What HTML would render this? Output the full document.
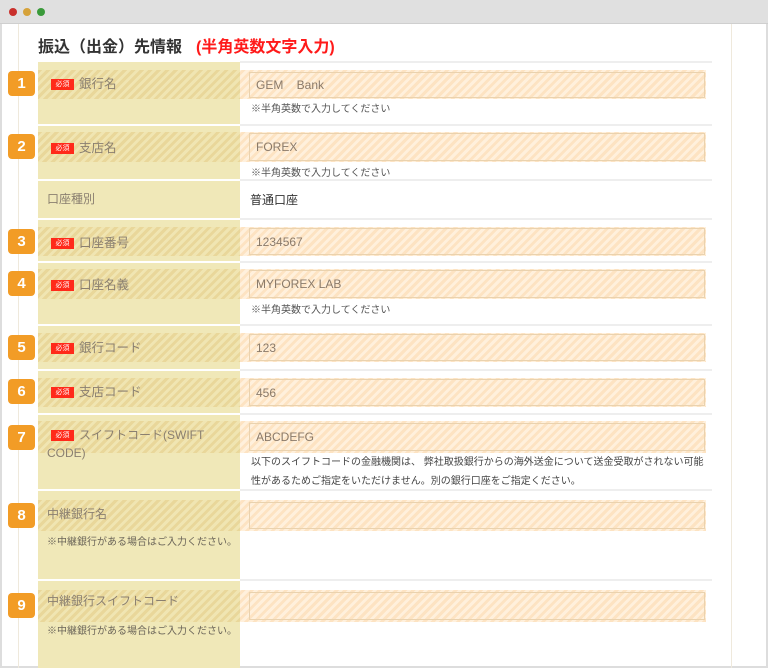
<!DOCTYPE html>
<html><head><meta charset="utf-8">
<style>
*{margin:0;padding:0;box-sizing:border-box}
body{width:768px;height:668px;overflow:hidden;background:#fff;font-family:"Liberation Sans","Noto Sans CJK JP",sans-serif;position:relative}
.tb{position:absolute;left:0;top:0;width:768px;height:24px;background:#e0e0e0;border-bottom:1px solid #cfcfcf}
.dot{position:absolute;top:8px;width:8px;height:8px;border-radius:50%}
.frame{position:absolute;left:0;top:24px;width:768px;height:644px;border-left:2px solid #ddd;border-right:2px solid #ddd;border-bottom:2px solid #ddd}
.vl{position:absolute;top:24px;height:644px;width:1px;background:#efe9dc}
h1{position:absolute;left:38px;top:33px;font-size:16px;font-weight:bold;color:#333;white-space:nowrap}
h1 span{color:#ff1a1a;margin-left:14px}
.lab{position:absolute;left:38px;width:202px;background:#f0e8b8}
.sepr{position:absolute;left:240px;width:472px;height:2px;background:#eeeeee}
.hat{position:absolute;left:38px;width:668px;background:repeating-linear-gradient(135deg,#fde3c2 0 3px,#fff0dc 3px 6px)}
.hatl{position:absolute;left:38px;width:202px;background:repeating-linear-gradient(135deg,#e9d79a 0 3px,#f0e5b2 3px 6px)}
.inp{position:absolute;left:249px;width:456px;border:1px solid #ead2ae;font-size:12px;color:#8a7a6a;padding-left:6px;display:flex;align-items:center}
.badge{position:absolute;left:8px;width:27px;height:25px;background:#f29c26;border-radius:4px;color:#fff;font-weight:bold;font-size:15px;text-align:center;line-height:25px}
.req{display:inline-block;background:#ff2a1a;color:#fff;font-size:7px;width:23px;height:11px;line-height:11px;text-align:center;vertical-align:2px;margin-right:5px}
.lt{position:absolute;left:51px;font-size:12.5px;color:#8a7f70;white-space:nowrap}
.lt2{position:absolute;left:47px;font-size:12px;color:#8a7f70;line-height:18px}
.note{position:absolute;left:251px;font-size:10px;color:#555;white-space:nowrap}
.ln{position:absolute;left:47px;font-size:10px;color:#6a6458;line-height:19px;width:190px}
</style></head><body>
<div class="tb"></div>
<div class="dot" style="left:9px;background:#c9302c"></div>
<div class="dot" style="left:23px;background:#d6a23a"></div>
<div class="dot" style="left:37px;background:#3a9a3a"></div>
<div class="frame"></div>
<div class="vl" style="left:18px"></div>
<div class="vl" style="left:731px"></div>
<h1>振込（出金）先情報<span>(半角英数文字入力)</span></h1>

<div class="lab" style="top:62px;height:606px"></div>
<!-- separators (white in label col, gray in right col) -->
<div class="sepr" style="top:61px"></div>
<div class="lab" style="top:124px;height:2px;background:#fff"></div><div class="sepr" style="top:124px"></div>
<div class="lab" style="top:179px;height:2px;background:#fff"></div><div class="sepr" style="top:179px"></div>
<div class="lab" style="top:218px;height:2px;background:#fff"></div><div class="sepr" style="top:218px"></div>
<div class="lab" style="top:261px;height:2px;background:#fff"></div><div class="sepr" style="top:261px"></div>
<div class="lab" style="top:324px;height:2px;background:#fff"></div><div class="sepr" style="top:324px"></div>
<div class="lab" style="top:369px;height:2px;background:#fff"></div><div class="sepr" style="top:369px"></div>
<div class="lab" style="top:413px;height:2px;background:#fff"></div><div class="sepr" style="top:413px"></div>
<div class="lab" style="top:489px;height:2px;background:#fff"></div><div class="sepr" style="top:489px"></div>
<div class="lab" style="top:579px;height:2px;background:#fff"></div><div class="sepr" style="top:579px"></div>

<!-- R1 -->
<div class="hat" style="top:70px;height:29px"></div><div class="hatl" style="top:70px;height:29px"></div>
<div class="inp" style="top:72px;height:26px">GEM&nbsp;&nbsp;&nbsp;&nbsp;Bank</div>
<div class="badge" style="top:71px">1</div>
<div class="lt" style="top:73px"><span class="req">必須</span>銀行名</div>
<div class="note" style="top:100px">※半角英数で入力してください</div>
<!-- R2 -->
<div class="hat" style="top:132px;height:30px"></div><div class="hatl" style="top:132px;height:30px"></div>
<div class="inp" style="top:133px;height:28px">FOREX</div>
<div class="badge" style="top:134px">2</div>
<div class="lt" style="top:137px"><span class="req">必須</span>支店名</div>
<div class="note" style="top:164px">※半角英数で入力してください</div>
<!-- R3 -->
<div class="lt2" style="top:190px">口座種別</div>
<div class="note" style="top:191px;font-size:12px;color:#333;left:250px">普通口座</div>
<!-- R4 -->
<div class="hat" style="top:227px;height:29px"></div><div class="hatl" style="top:227px;height:29px"></div>
<div class="inp" style="top:228px;height:27px">1234567</div>
<div class="badge" style="top:229px">3</div>
<div class="lt" style="top:232px"><span class="req">必須</span>口座番号</div>
<!-- R5 -->
<div class="hat" style="top:269px;height:30px"></div><div class="hatl" style="top:269px;height:30px"></div>
<div class="inp" style="top:270px;height:28px">MYFOREX LAB</div>
<div class="badge" style="top:271px">4</div>
<div class="lt" style="top:274px"><span class="req">必須</span>口座名義</div>
<div class="note" style="top:301px">※半角英数で入力してください</div>
<!-- R6 -->
<div class="hat" style="top:333px;height:29px"></div><div class="hatl" style="top:333px;height:29px"></div>
<div class="inp" style="top:334px;height:27px">123</div>
<div class="badge" style="top:335px">5</div>
<div class="lt" style="top:337px"><span class="req">必須</span>銀行コード</div>
<!-- R7 -->
<div class="hat" style="top:378px;height:29px"></div><div class="hatl" style="top:378px;height:29px"></div>
<div class="inp" style="top:379px;height:27px">456</div>
<div class="badge" style="top:379px">6</div>
<div class="lt" style="top:381px"><span class="req">必須</span>支店コード</div>
<!-- R8 -->
<div class="hat" style="top:421px;height:32px"></div><div class="hatl" style="top:421px;height:32px"></div>
<div class="inp" style="top:423px;height:28px">ABCDEFG</div>
<div class="badge" style="top:425px">7</div>
<div class="lt2" style="top:426px;left:47px;width:190px"><span class="req" style="margin-left:4px">必須</span>スイフトコード(SWIFT CODE)</div>
<div class="note" style="top:453px;line-height:19px;white-space:normal;width:460px;color:#444">以下のスイフトコードの金融機関は、 弊社取扱銀行からの海外送金について送金受取がされない可能性があるためご指定をいただけません。別の銀行口座をご指定ください。</div>
<!-- R9 -->
<div class="hat" style="top:500px;height:31px"></div><div class="hatl" style="top:500px;height:31px"></div>
<div class="inp" style="top:502px;height:27px"></div>
<div class="badge" style="top:503px">8</div>
<div class="lt2" style="top:505px">中継銀行名</div>
<div class="ln" style="top:533px">※中継銀行がある場合はご入力ください。</div>
<!-- R10 -->
<div class="hat" style="top:590px;height:32px"></div><div class="hatl" style="top:590px;height:32px"></div>
<div class="inp" style="top:592px;height:28px"></div>
<div class="badge" style="top:593px">9</div>
<div class="lt2" style="top:592px">中継銀行スイフトコード</div>
<div class="ln" style="top:622px">※中継銀行がある場合はご入力ください。</div>
</body></html>
